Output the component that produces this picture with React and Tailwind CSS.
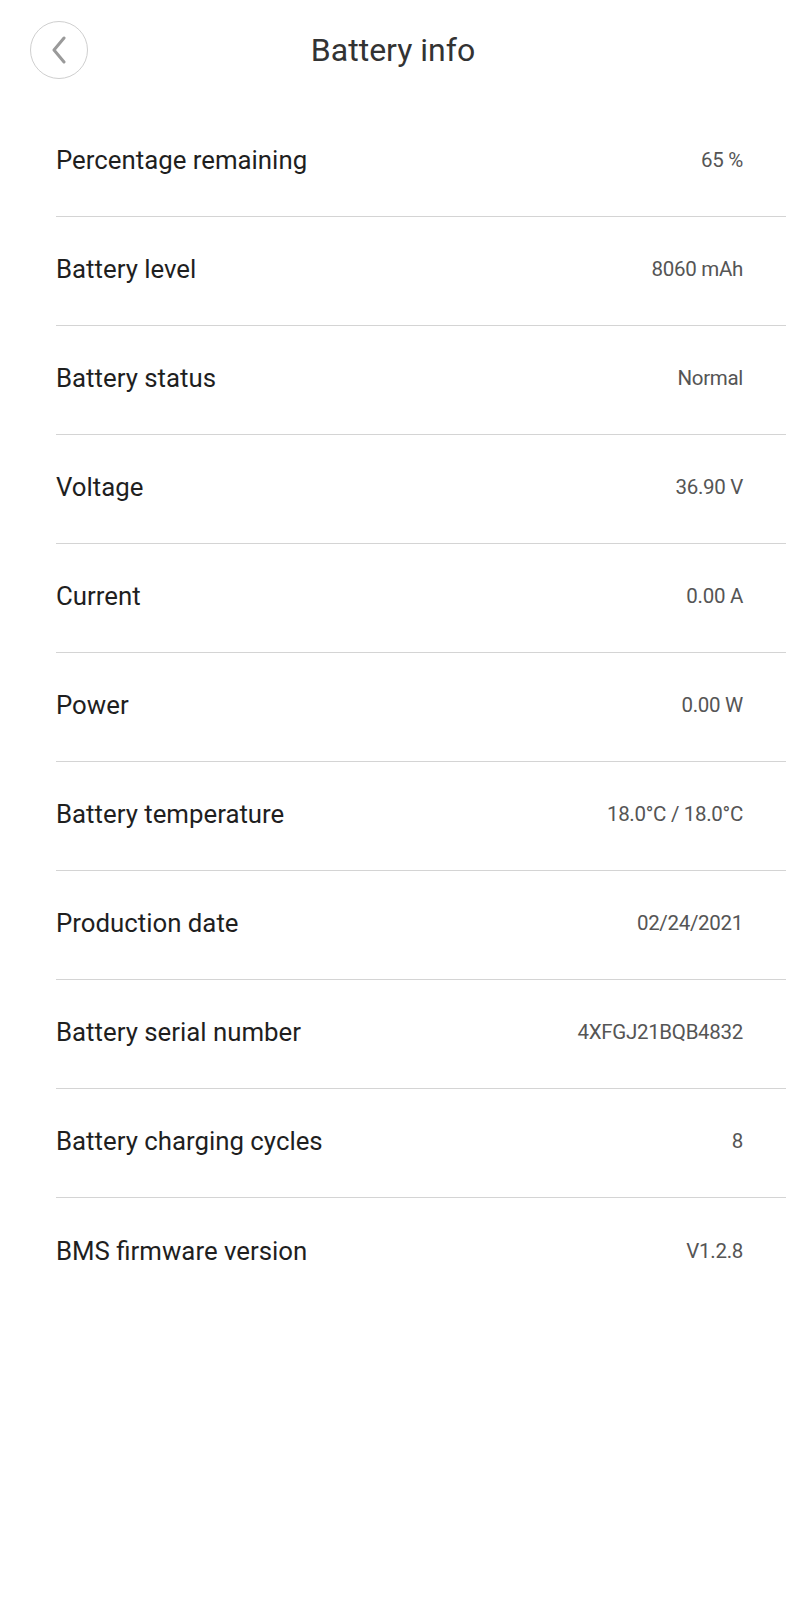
const ROWS = [
  ["Percentage remaining", "65 %"],
  ["Battery level", "8060 mAh"],
  ["Battery status", "Normal"],
  ["Voltage", "36.90 V"],
  ["Current", "0.00 A"],
  ["Power", "0.00 W"],
  ["Battery temperature", "18.0°C / 18.0°C"],
  ["Production date", "02/24/2021"],
  ["Battery serial number", "4XFGJ21BQB4832"],
  ["Battery charging cycles", "8"],
  ["BMS firmware version", "V1.2.8"],
];

export default function App() {
  return (
    <div className="min-h-[1600px] bg-white font-['Roboto','Liberation_Sans',sans-serif]">
      {/* Header */}
      <div className="grid h-[108px] grid-cols-[1fr_auto_1fr] items-center px-[30px] pb-[9px]">
        <button className="flex h-[58px] w-[58px] items-center justify-center rounded-full border border-[#cfcfcf] bg-white">
          <svg width="18" height="28" viewBox="0 0 18 28" fill="none">
            <path d="M14 2 L4 14 L14 26" stroke="#9a9a9a" strokeWidth="3" strokeLinecap="round" strokeLinejoin="round" />
          </svg>
        </button>
        <h1 className="text-[32px] font-normal text-[#333333]">Battery info</h1>
        <div />
      </div>

      {/* Rows */}
      <div className="pl-[56px]">
        {ROWS.map(([label, value], i) => (
          <div
            key={label}
            className={`flex h-[109px] items-center justify-between pb-[3px] pr-[43px] ${i < ROWS.length - 1 ? "border-b-[1.5px] border-[#d4d4d4]" : ""}`}
          >
            <span className="text-[25.8px] text-[#1f1f1f]">{label}</span>
            <span className="text-[20.5px] tracking-[-0.3px] text-[#555555]">{value}</span>
          </div>
        ))}
      </div>
    </div>
  );
}
